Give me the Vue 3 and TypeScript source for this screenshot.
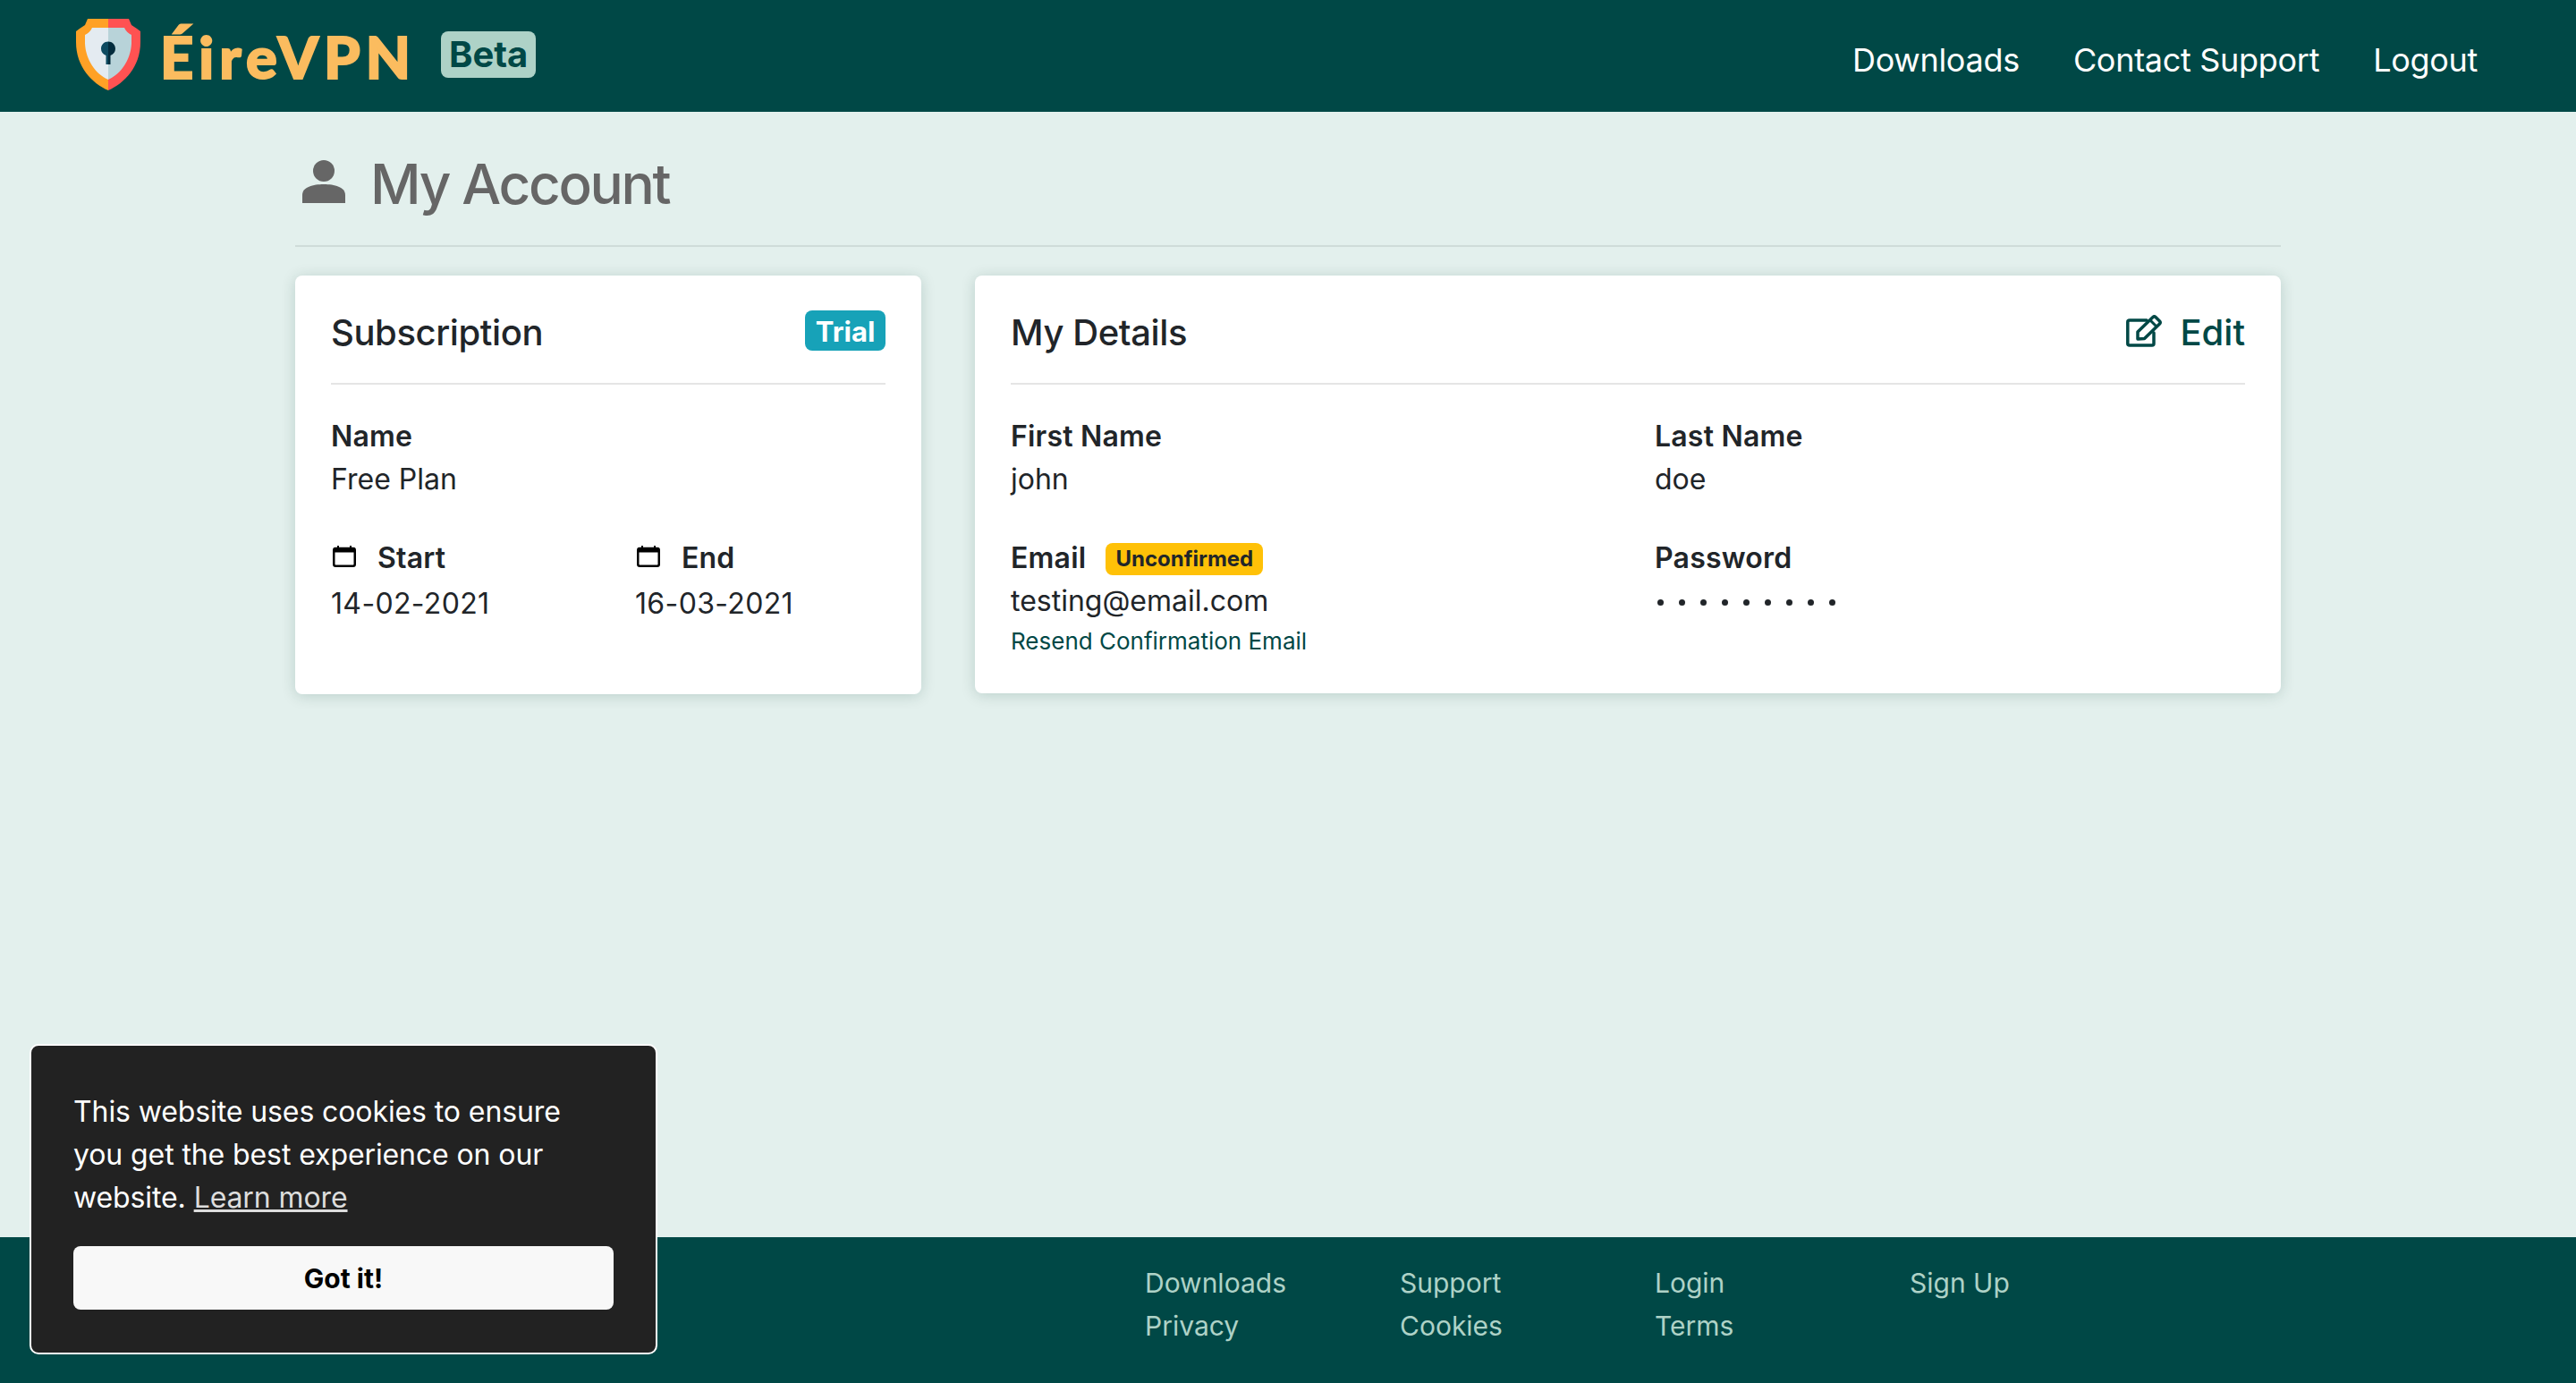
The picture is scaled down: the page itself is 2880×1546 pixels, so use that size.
<script setup lang="ts">
interface Field {
  label: string;
  value: string;
}

const navLinks: string[] = ["Downloads", "Contact Support", "Logout"];
const footerLinks: string[] = ["Downloads", "Support", "Login", "Sign Up", "Privacy", "Cookies", "Terms"];

const dates: Field[] = [
  { label: "Start", value: "14-02-2021" },
  { label: "End", value: "16-03-2021" },
];
</script>

<template>
  <div class="page">
    <header class="topbar">
      <div class="brand">
        <svg class="shield" viewBox="0 0 72 80" width="72" height="80">
          <path d="M13 0H36V80C18 72 0 54 0 26V14L4 11L10 7Z" fill="#ffa126" />
          <path d="M59 0H36V80C54 72 72 54 72 26V14L68 11L62 7Z" fill="#ff5252" />
          <path d="M36 10H18C16 14 14 16 10 18V28C11 46 22 62 36 68Z" fill="#e4ebf1" />
          <path d="M36 10H54C56 14 58 16 62 18V28C61 46 50 62 36 68Z" fill="#b8d3d9" />
          <path d="M36 25.500C31.500 25.500 28 29 28 33.500C28 37 30 39.500 33.500 41V51H36Z" fill="#0d4a60" />
          <path d="M36 25.500C40.500 25.500 44 29 44 33.500C44 37 42 39.500 38.500 41V51H36Z" fill="#032c3d" />
        </svg>
        <span class="wordmark">ÉireVPN</span>
        <span class="beta">Beta</span>
      </div>
      <nav class="nav">
        <a v-for="link in navLinks" :key="link" class="nav-link">{{ link }}</a>
      </nav>
    </header>

    <main class="content">
      <h1 class="title">
        <svg class="title-icon" viewBox="0 0 48 48" width="48" height="48">
          <ellipse cx="24" cy="12" rx="12" ry="12" fill="#666" />
          <path d="M0 48V39C0 30 12 27 24 27C36 27 48 30 48 39V48Z" fill="#666" />
        </svg>
        My Account
      </h1>

      <div class="cards">
        <section class="card card-sub">
          <div class="card-head">
            <h2>Subscription</h2>
            <span class="trial">Trial</span>
          </div>
          <div class="field">
            <div class="label">Name</div>
            <div class="value">Free Plan</div>
          </div>
          <div class="dates">
            <div v-for="d in dates" :key="d.label">
              <div class="label">
                <svg class="cal" viewBox="0 0 26 24" width="26" height="24">
                  <rect x="1.250" y="3" width="23.500" height="19.750" rx="2" fill="none" stroke="#000" stroke-width="2.500" />
                  <path d="M1 2.500H25V7.500H1Z" fill="#000" />
                  <path d="M6 0V3M20 0V3" stroke="#000" stroke-width="2" />
                </svg>
                {{ d.label }}
              </div>
              <div class="value date">{{ d.value }}</div>
            </div>
          </div>
        </section>

        <section class="card card-details">
          <div class="card-head">
            <h2>My Details</h2>
            <a class="edit">
              <svg class="edit-icon" viewBox="0 0 40 36" width="40" height="36" fill="none" stroke="#004846" stroke-width="3.500" stroke-linejoin="round" stroke-linecap="round">
                <path d="M23 6H4C2.500 6 1.800 6.800 1.800 8V32C1.800 33.200 2.500 34 4 34H29C30.500 34 31 33.200 31 32V20" />
                <path d="M13 19L30 2.500C31 1.600 32 1.600 33 2.500L37.500 7C38.500 8 38.500 9 37.500 10L20.500 26.500L13 27Z" />
                <path d="M27 6L34 13" stroke-width="3" />
              </svg>
              Edit
            </a>
          </div>
          <div class="details-grid">
            <div>
              <div class="label">First Name</div>
              <div class="value">john</div>
            </div>
            <div>
              <div class="label">Last Name</div>
              <div class="value">doe</div>
            </div>
            <div>
              <div class="label">Email <span class="unconfirmed">Unconfirmed</span></div>
              <div class="value">testing@email.com</div>
              <a class="resend">Resend Confirmation Email</a>
            </div>
            <div>
              <div class="label">Password</div>
              <div class="dots">
                <i v-for="n in 9" :key="n"></i>
              </div>
            </div>
          </div>
        </section>
      </div>
    </main>

    <footer class="footer">
      <div class="footer-grid">
        <a v-for="link in footerLinks" :key="link">{{ link }}</a>
      </div>
    </footer>

    <div class="cookie">
      <p>This website uses cookies to ensure you get the best experience on our website. <a>Learn more</a></p>
      <button class="got-it">Got it!</button>
    </div>
  </div>
</template>

<style>
body {
  background: #e3f0ed;
}
</style>

<style scoped>
.page {
  min-height: 1546px;
  display: flex;
  flex-direction: column;
  position: relative;
  overflow: hidden;
  background: #e3f0ed;
  font-family: Inter, "Liberation Sans", sans-serif;
  font-size: 32px;
  line-height: 48px;
  color: #212529;
}

.topbar {
  height: 125px;
  background: #004846;
  display: flex;
  align-items: center;
  justify-content: space-between;
  padding: 0 110px 0 85px;
}

.brand {
  display: flex;
  align-items: center;
}

.shield {
  margin-top: -4px;
}

.wordmark {
  margin-left: 22px;
  font-family: Lato, sans-serif;
  font-weight: 900;
  font-size: 65px;
  line-height: 80px;
  color: #fbbc5f;
  letter-spacing: 6px;
  -webkit-text-stroke: 2px #fbbc5f;
}

.beta {
  margin-left: 28px;
  width: 106px;
  height: 52px;
  background: #aed2c7;
  border-radius: 8px;
  color: #004846;
  font-weight: 700;
  font-size: 40px;
  line-height: 52px;
  text-align: center;
  margin-top: -4px;
}

.nav {
  display: flex;
  gap: 60px;
  margin-top: 8px;
}

.nav-link {
  color: #fff;
  font-size: 36px;
  line-height: 54px;
  letter-spacing: -0.300px;
}

.content {
  flex: 1;
  width: 2220px;
  margin: 0 auto;
}

.title {
  margin: 0;
  height: 151px;
  padding: 40px 0 28px 8px;
  box-sizing: border-box;
  display: flex;
  align-items: center;
  gap: 28px;
  border-bottom: 2px solid #cfdcd9;
  font-size: 62px;
  line-height: 80px;
  font-weight: 500;
  letter-spacing: -2.300px;
  color: #666;
}

.title-icon {
  margin-top: -6px;
}

.cards {
  margin-top: 32px;
  display: flex;
  gap: 60px;
  align-items: flex-start;
}

.card {
  background: #fff;
  border-radius: 8px;
  box-shadow: 0 2px 16px rgba(0, 60, 50, 0.18);
  padding: 0 40px;
  box-sizing: border-box;
}

.card-sub {
  width: 700px;
  height: 468px;
}

.card-details {
  width: 1460px;
  height: 467px;
}

.card-head {
  height: 122px;
  padding-top: 8px;
  box-sizing: border-box;
  border-bottom: 2px solid #e5e5e5;
  display: flex;
  align-items: center;
  justify-content: space-between;
  margin-bottom: 34px;
}

.card-head h2 {
  margin: 0;
  font-size: 40px;
  line-height: 60px;
  font-weight: 500;
  letter-spacing: -0.400px;
}

.trial {
  width: 90px;
  height: 45px;
  margin-top: -6px;
  border-radius: 8px;
  background: #17a2b8;
  color: #fff;
  font-size: 31px;
  font-weight: 700;
  line-height: 47px;
  text-align: center;
}

.edit {
  display: flex;
  align-items: center;
  gap: 20px;
  font-size: 40px;
  line-height: 60px;
  font-weight: 500;
  color: #004846;
}

.edit-icon {
  margin-top: -4px;
}

.label {
  font-weight: 600;
  letter-spacing: 0.200px;
  display: flex;
  align-items: center;
}

.value {
  font-weight: 400;
}

.date {
  margin-top: 3px;
  letter-spacing: 0.350px;
}

.dates {
  margin-top: 40px;
  display: grid;
  grid-template-columns: 340px 1fr;
}

.cal {
  margin: -4px 24px 0 2px;
}

.details-grid {
  display: grid;
  grid-template-columns: 720px 1fr;
  row-gap: 40px;
}

.unconfirmed {
  margin-left: 22px;
  width: 176px;
  height: 36px;
  border-radius: 8px;
  background: #ffc107;
  font-size: 24px;
  line-height: 36px;
  font-weight: 700;
  letter-spacing: 0;
  text-align: center;
  margin-top: 2px;
}

.resend {
  display: block;
  color: #004846;
  font-size: 26px;
  line-height: 42px;
}

.dots {
  display: flex;
  gap: 17px;
  height: 50px;
  align-items: center;
  padding-left: 3px;
}

.dots i {
  width: 7px;
  height: 7px;
  border-radius: 50%;
  background: #212529;
}

.footer {
  height: 163px;
  background: #004846;
  box-sizing: border-box;
  padding-top: 27px;
}

.footer-grid {
  margin-left: 1280px;
  display: grid;
  grid-template-columns: repeat(4, 285px);
  font-size: 30px;
  color: #aed2c7;
}

.cookie {
  position: absolute;
  left: 33px;
  top: 1167px;
  width: 702px;
  height: 347px;
  box-sizing: border-box;
  padding: 50px 47px 0;
  background: #222;
  border: 2px solid #fff;
  border-radius: 10px;
  color: #fff;
}

.cookie p {
  margin: 0;
  letter-spacing: -0.100px;
}

.cookie a {
  color: #ddd;
  text-decoration: underline;
}

.got-it {
  display: block;
  width: 604px;
  height: 71px;
  margin-top: 30px;
  border: none;
  border-radius: 8px;
  background: #f8f8f8;
  color: #000;
  font-family: inherit;
  font-size: 30px;
  font-weight: 700;
}
</style>
